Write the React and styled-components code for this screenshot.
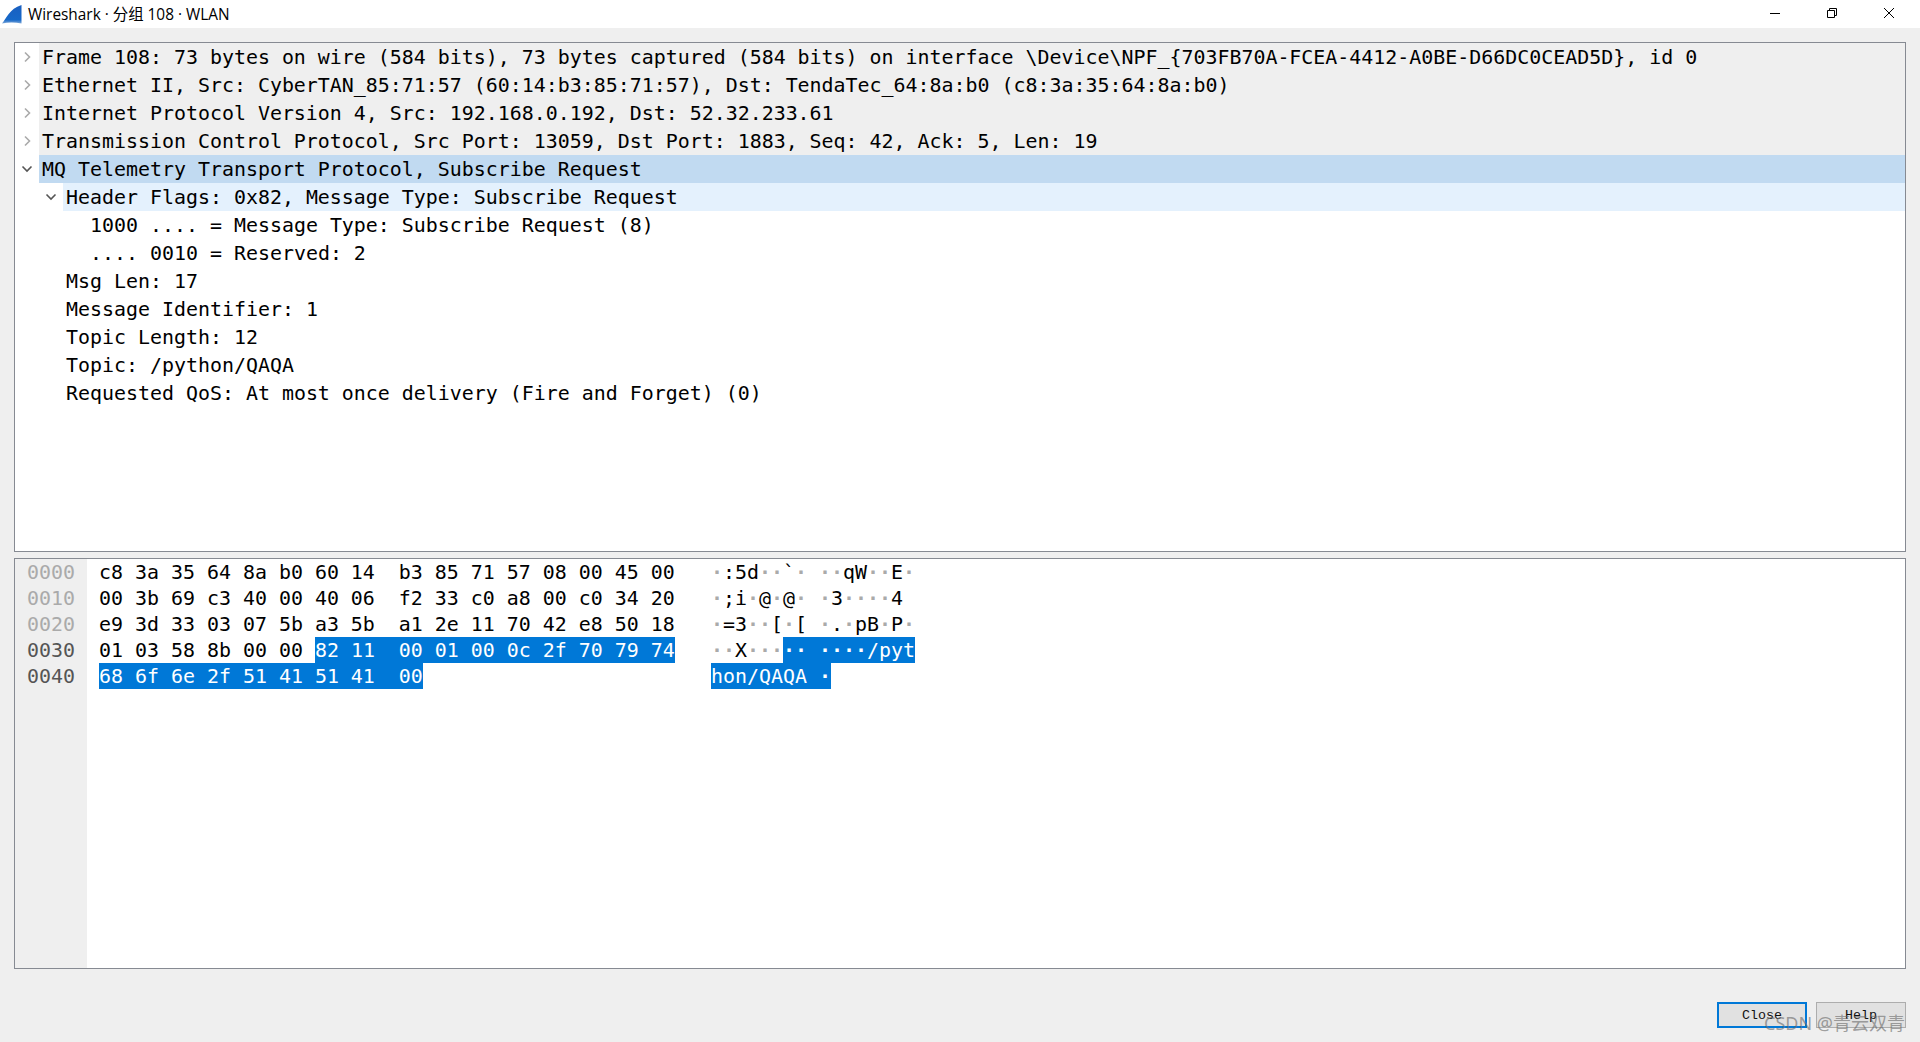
import React from "react";
import styled, { createGlobalStyle } from "styled-components";

const Global = createGlobalStyle`
  html, body { margin: 0; padding: 0; background: #efefef; }
  #root { height: 1042px; }
`;

const MONO = `"DejaVu Sans Mono", "Liberation Mono", monospace`;

const Window = styled.div`
  position: relative;
  width: 1920px;
  height: 1042px;
  overflow: hidden;
  display: flex;
  flex-direction: column;
  background: #efefef;
`;

const TitleBar = styled.header`
  height: 28px;
  flex: none;
  background: #fff;
  display: flex;
  align-items: center;
`;

const AppIcon = styled.svg`
  width: 22px;
  height: 22px;
  margin: 0 5px 0 1px;
  flex: none;
`;

const TitleText = styled.span`
  font: 15.4px "Open Sans", "Noto Sans CJK SC", sans-serif;
  color: #000;
  flex: 1;
  white-space: pre;
  margin-top: -2px;
`;

const WinControls = styled.div`
  display: flex;
  height: 28px;
  padding-right: 3px;
`;

const WinButton = styled.div`
  width: 57px;
  display: flex;
  align-items: center;
  justify-content: center;
  & svg { width: 12px; height: 12px; display: block; margin-top: -2px; }
`;

const Content = styled.main`
  flex: 1;
  display: flex;
  flex-direction: column;
  padding: 14px 14px 0;
`;

const Panel = styled.section`
  box-sizing: border-box;
  height: ${(p) => p.$h}px;
  margin-bottom: ${(p) => p.$mb || 0}px;
  border: 1px solid #868a92;
  background: #fff;
  font-family: ${MONO};
  font-size: 19.93px;
  color: #000;
  overflow: hidden;
`;

const TreeRow = styled.div`
  display: flex;
  height: 28px;
`;

const Indent = styled.div`
  width: ${(p) => (p.$level + 1) * 24}px;
  flex: none;
  display: flex;
  justify-content: flex-end;
`;

const ArrowSlot = styled.div`
  width: 24px;
  height: 28px;
  display: flex;
  align-items: center;
  justify-content: center;
  & svg { width: 12px; height: 12px; display: block; }
`;

const rowBg = { closed: "#efefef", selected: "#c1daf1", child: "#e4f1fd", plain: "transparent" };

const RowBody = styled.div`
  flex: 1;
  height: 28px;
  padding-left: 3px;
  line-height: 30px;
  white-space: pre;
  background: ${(p) => rowBg[p.$tone]};
`;

const HexPanelBody = styled.div`
  display: flex;
  height: 100%;
`;

const OffsetColumn = styled.div`
  width: 60px;
  padding-left: 12px;
  flex: none;
  background: #efefef;
`;

const Offset = styled.div`
  height: 26px;
  line-height: 28px;
  color: ${(p) => (p.$active ? "#555" : "#aaa")};
`;

const HexColumn = styled.div`
  padding-left: 12px;
  flex: 1;
`;

const HexRow = styled.div`
  display: flex;
  height: 26px;
  line-height: 28px;
  white-space: pre;
`;

const HexCells = styled.div`
  width: 612px;
  flex: none;
`;

const Sel = styled.span`
  display: inline-block;
  height: 26px;
  background: ${(p) => (p.$on ? "#0078d7" : "transparent")};
  color: ${(p) => (p.$on ? "#fff" : "#000")};
`;

const Dot = styled.span`
  color: ${(p) => (p.$on ? "#fff" : "#aaa")};
  font-weight: bold;
`;

const Footer = styled.footer`
  display: flex;
  justify-content: flex-end;
  gap: 9px;
  margin-top: 33px;
`;

const Button = styled.button`
  box-sizing: border-box;
  width: 90px;
  height: 26px;
  padding: 1px 0 0;
  background: #e1e1e1;
  border: ${(p) => (p.$primary ? "2px solid #0078d7" : "1px solid #adadad")};
  font: 13.33px "Liberation Mono", monospace;
  color: #111;
`;

const Watermark = styled.div`
  position: absolute;
  right: 15px;
  top: 1009px;
  font: 18px "Noto Sans", "Noto Sans CJK SC", sans-serif;
  color: rgba(105, 105, 105, 0.62);
  white-space: pre;
  pointer-events: none;
`;

const Right = ({ dark }) => (
  <svg viewBox="0 0 12 12" fill="none" stroke={dark ? "#555" : "#aaa"} strokeWidth="1.6">
    <path d="M4 1.5 L8.5 6 L4 10.5" />
  </svg>
);
const Down = () => (
  <svg viewBox="0 0 12 12" fill="none" stroke="#555" strokeWidth="1.6">
    <path d="M1.5 3.5 L6 8 L10.5 3.5" />
  </svg>
);

const TREE = [
  { level: 0, tone: "closed", arrow: "right", text: "Frame 108: 73 bytes on wire (584 bits), 73 bytes captured (584 bits) on interface \\Device\\NPF_{703FB70A-FCEA-4412-A0BE-D66DC0CEAD5D}, id 0" },
  { level: 0, tone: "closed", arrow: "right", text: "Ethernet II, Src: CyberTAN_85:71:57 (60:14:b3:85:71:57), Dst: TendaTec_64:8a:b0 (c8:3a:35:64:8a:b0)" },
  { level: 0, tone: "closed", arrow: "right", text: "Internet Protocol Version 4, Src: 192.168.0.192, Dst: 52.32.233.61" },
  { level: 0, tone: "closed", arrow: "right", text: "Transmission Control Protocol, Src Port: 13059, Dst Port: 1883, Seq: 42, Ack: 5, Len: 19" },
  { level: 0, tone: "selected", arrow: "down", text: "MQ Telemetry Transport Protocol, Subscribe Request" },
  { level: 1, tone: "child", arrow: "down", text: "Header Flags: 0x82, Message Type: Subscribe Request" },
  { level: 2, tone: "plain", text: "1000 .... = Message Type: Subscribe Request (8)" },
  { level: 2, tone: "plain", text: ".... 0010 = Reserved: 2" },
  { level: 1, tone: "plain", text: "Msg Len: 17" },
  { level: 1, tone: "plain", text: "Message Identifier: 1" },
  { level: 1, tone: "plain", text: "Topic Length: 12" },
  { level: 1, tone: "plain", text: "Topic: /python/QAQA" },
  { level: 1, tone: "plain", text: "Requested QoS: At most once delivery (Fire and Forget) (0)" },
];

const HEX = [
  { off: "0000", hex: [["c8 3a 35 64 8a b0 60 14  b3 85 71 57 08 00 45 00", false]], asc: [["·:5d··`· ··qW··E·", false]] },
  { off: "0010", hex: [["00 3b 69 c3 40 00 40 06  f2 33 c0 a8 00 c0 34 20", false]], asc: [["·;i·@·@· ·3····4 ", false]] },
  { off: "0020", hex: [["e9 3d 33 03 07 5b a3 5b  a1 2e 11 70 42 e8 50 18", false]], asc: [["·=3··[·[ ·.·pB·P·", false]] },
  { off: "0030", active: true, hex: [["01 03 58 8b 00 00 ", false], ["82 11  00 01 00 0c 2f 70 79 74", true]], asc: [["··X···", false], ["·· ····/pyt", true]] },
  { off: "0040", active: true, hex: [["68 6f 6e 2f 51 41 51 41  00", true]], asc: [["hon/QAQA ·", true]] },
];

const Ascii = ({ text, on }) => (
  <Sel $on={on}>
    {[...text].map((c, i) => (c === "·" ? <Dot key={i} $on={on}>·</Dot> : c))}
  </Sel>
);

export default function App() {
  return (
    <Window>
      <Global />
      <TitleBar>
        <AppIcon viewBox="0 0 22 22">
          <defs>
            <linearGradient id="fin" x1="0" y1="0" x2="0" y2="1">
              <stop offset="0" stopColor="#1a5fc0" />
              <stop offset="0.8" stopColor="#1668c8" />
              <stop offset="1" stopColor="#7fa8d8" />
            </linearGradient>
          </defs>
          <path d="M1 20.5 C6 15 8 6 20.5 2 L20.5 20.5 C14 19.3 7 19.3 1 20.5 Z" fill="url(#fin)" />
        </AppIcon>
        <TitleText>Wireshark · 分组 108 · WLAN</TitleText>
        <WinControls>
          <WinButton>
            <svg viewBox="0 0 12 12" stroke="#000" fill="none"><path d="M1 6.5 H11" /></svg>
          </WinButton>
          <WinButton>
            <svg viewBox="0 0 12 12" stroke="#000" fill="none">
              <path d="M1.5 3.5 H8.5 V10.5 H1.5 Z M3.5 3.5 V1.5 H10.5 V8.5 H8.5" />
            </svg>
          </WinButton>
          <WinButton>
            <svg viewBox="0 0 12 12" stroke="#000" fill="none"><path d="M1 1 L11 11 M11 1 L1 11" /></svg>
          </WinButton>
        </WinControls>
      </TitleBar>
      <Content>
        <Panel $h={510} $mb={6}>
          {TREE.map((r) => (
            <TreeRow key={r.text}>
              <Indent $level={r.level}>
                <ArrowSlot>
                  {r.arrow === "right" && <Right />}
                  {r.arrow === "down" && <Down />}
                </ArrowSlot>
              </Indent>
              <RowBody $tone={r.tone}>{r.text}</RowBody>
            </TreeRow>
          ))}
        </Panel>
        <Panel $h={411}>
          <HexPanelBody>
            <OffsetColumn>
              {HEX.map((r) => (
                <Offset key={r.off} $active={r.active}>{r.off}</Offset>
              ))}
            </OffsetColumn>
            <HexColumn>
              {HEX.map((r) => (
                <HexRow key={r.off}>
                  <HexCells>
                    {r.hex.map(([t, on], i) => (
                      <Sel key={i} $on={on}>{t}</Sel>
                    ))}
                  </HexCells>
                  <div>
                    {r.asc.map(([t, on], i) => (
                      <Ascii key={i} text={t} on={on} />
                    ))}
                  </div>
                </HexRow>
              ))}
            </HexColumn>
          </HexPanelBody>
        </Panel>
        <Footer>
          <Button $primary>Close</Button>
          <Button>Help</Button>
        </Footer>
      </Content>
      <Watermark>CSDN @青云双青</Watermark>
    </Window>
  );
}
